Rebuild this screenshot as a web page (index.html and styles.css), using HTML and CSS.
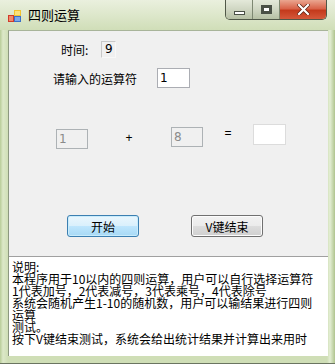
FILE: index.html
```html
<!DOCTYPE html>
<html lang="zh-CN">
<head>
    <meta charset="UTF-8">
    <title>四则运算</title>
    <link rel="stylesheet" href="styles.css">
</head>
<body>
    <div class="window">
        <div class="titlebar">
            <svg class="app-icon" width="14" height="14" viewBox="0 0 14 14">
                <rect x="0" y="6" width="6" height="7" fill="#d23a2a"/>
                <rect x="1" y="7" width="4" height="5" fill="#f08a6a"/>
                <rect x="6" y="1" width="7" height="6" fill="#f2c230"/>
                <rect x="7" y="2" width="5" height="4" fill="#fbe27a"/>
                <rect x="6" y="7" width="7" height="6" fill="#3a6fc8"/>
                <rect x="7" y="8" width="5" height="4" fill="#7fa8e8"/>
            </svg>
            <span class="title">四则运算</span>
            <div class="caption-buttons">
                <div class="cap-btn cap-min"><span class="min-glyph"></span></div>
                <div class="cap-btn cap-max"><span class="max-glyph"></span></div>
                <div class="cap-btn cap-close">
                    <svg width="13" height="11" viewBox="0 0 13 11">
                        <path d="M2 1 L11 10 M11 1 L2 10" stroke="#5a2010" stroke-width="3.6" stroke-linecap="square"/>
                        <path d="M2 1 L11 10 M11 1 L2 10" stroke="#ffffff" stroke-width="2.2" stroke-linecap="square"/>
                    </svg>
                </div>
            </div>
        </div>

        <div class="client">
            <div class="row row-time">
                <span class="label label-time">时间:</span>
                <div class="box box-time">9</div>
            </div>
            <div class="row row-op">
                <span class="label label-op">请输入的运算符</span>
                <div class="box box-op">1</div>
            </div>
            <div class="row row-calc">
                <div class="box box-disabled box-a">1</div>
                <span class="sign sign-plus">+</span>
                <div class="box box-disabled box-b">8</div>
                <span class="sign sign-eq">=</span>
                <div class="box box-result"></div>
            </div>
            <div class="row row-buttons">
                <button class="btn btn-focus">开始</button>
                <button class="btn btn-end">V键结束</button>
            </div>
            <div class="notes">说明:
本程序用于10以内的四则运算，用户可以自行选择运算符
1代表加号，2代表减号，3代表乘号，4代表除号
系统会随机产生1-10的随机数，用户可以输结果进行四则
运算
测试。
按下V键结束测试，系统会给出统计结果并计算出来用时</div>
        </div>
    </div>
</body>
</html>
```

FILE: styles.css
```css
* {
    margin: 0;
    padding: 0;
    box-sizing: border-box;
}

body {
    width: 335px;
    height: 364px;
    overflow: hidden;
    background: #cfdcb8;
    font-family: "Noto Sans CJK SC", "DejaVu Sans", sans-serif;
    font-size: 12px;
    color: #000;
}

/* Window frame */
.window {
    width: 335px;
    height: 364px;
    display: flex;
    flex-direction: column;
    padding: 0 7px 7px 8px;
    background: linear-gradient(to right, #b8cc98 0px, #dce8c8 3px, #cfdeb6 8px, #cfdeb6 327px, #e4eed4 330px, #b0c48e 335px);
    border-bottom: 1px solid #6a7460;
}

.titlebar {
    height: 30px;
    display: flex;
    align-items: center;
    position: relative;
    margin: 0 -7px 0 -8px;
    padding-left: 8px;
    background: linear-gradient(to bottom, #eaf0de 0%, #dde7cb 50%, #d0deb8 100%);
}

.app-icon {
    margin-right: 6px;
    margin-top: 1px;
}

.title {
    font-size: 13px;
    color: #000;
    margin-top: -1px;
}

/* Min / max / close */
.caption-buttons {
    position: absolute;
    top: 0;
    right: 8px;
    height: 20px;
    display: flex;
    border: 1px solid #505848;
    border-top: none;
    border-radius: 0 0 5px 5px;
    overflow: hidden;
}

.cap-btn {
    height: 19px;
    display: flex;
    align-items: center;
    justify-content: center;
}

.cap-min,
.cap-max {
    width: 27px;
    background: linear-gradient(to bottom, #e4e9da 0%, #cfd6c2 50%, #b6c0a4 100%);
    border-right: 1px solid #7e8872;
}

.min-glyph {
    width: 11px;
    height: 4px;
    margin-top: 6px;
    background: #fff;
    border: 1px solid #4a5046;
}

.max-glyph {
    width: 11px;
    height: 9px;
    border: 1px solid #4a5046;
    background: #fff;
    box-shadow: inset 0 0 0 2px #4a5046, inset 0 0 0 3px #fff;
}

.cap-close {
    width: 46px;
    background: linear-gradient(to bottom, #eaa690 0%, #d9644a 45%, #c43a1c 55%, #d5583a 100%);
}

/* Form client area */
.client {
    flex: 1;
    display: flex;
    flex-direction: column;
    background: #f0f0f0;
    border-left: 1px solid #8c9880;
    border-top: 1px solid #a8b49a;
}

.row {
    display: flex;
    align-items: center;
}

.label {
    white-space: nowrap;
}

.box {
    height: 20px;
    width: 32px;
    border: 1px solid #abadb3;
    background: #fff;
    padding: 1px 0 0 2px;
    line-height: 16px;
    font-family: "DejaVu Sans", sans-serif;
    font-size: 12px;
}

.row-time {
    margin-top: 10px;
    height: 17px;
}

.label-time {
    margin-left: 52px;
    width: 40px;
}

.box-time {
    width: 15px;
    height: 17px;
    padding: 0 0 0 3px;
    line-height: 15px;
    background: #f0f0f0;
    border-color: #c8c8c8 #f8f8f8 #f8f8f8 #c8c8c8;
}

.row-op {
    margin-top: 10px;
    height: 20px;
}

.label-op {
    margin-left: 44px;
    width: 104px;
}

.box-op {
    width: 33px;
}

.row-calc {
    margin-top: 36px;
    height: 25px;
    align-items: flex-start;
}

.box-disabled {
    background: #f0f0f0;
    border-color: #adb2b5;
    color: #8a8a8a;
}

.box-a {
    margin-left: 47px;
    margin-top: 5px;
}

.sign {
    width: 8px;
    text-align: center;
    font-family: "Liberation Sans", sans-serif;
    font-size: 12px;
    color: #000;
}

.sign-plus {
    margin-left: 37px;
    margin-top: 7px;
}

.box-b {
    margin-left: 38px;
    margin-top: 3px;
}

.sign-eq {
    margin-left: 21px;
    margin-top: 2px;
}

.box-result {
    margin-left: 21px;
    width: 33px;
    height: 21px;
    border-color: #dcdcdc;
}

/* Buttons */
.row-buttons {
    margin-top: 66px;
    height: 22px;
}

.btn {
    width: 72px;
    height: 22px;
    font-family: "Noto Sans CJK SC", sans-serif;
    font-size: 12px;
    color: #000;
    border: 1px solid #707070;
    border-radius: 3px;
    background: linear-gradient(to bottom, #f2f2f2 0%, #ebebeb 50%, #dddddd 51%, #cfcfcf 100%);
    box-shadow: inset 0 0 0 1px #fcfcfc;
}

.btn-focus {
    margin-left: 58px;
    border-color: #3c7fb1;
    background: linear-gradient(to bottom, #eaf6fd 0%, #d9f0fc 50%, #bee6fd 51%, #a7d9f5 100%);
    box-shadow: inset 0 0 0 1px #c8ecfc;
}

.btn-end {
    margin-left: 52px;
}

/* Notes textbox docked at the bottom */
.notes {
    margin-top: 19px;
    flex: 1;
    background: #fff;
    border-top: 1px solid #a0a0a0;
    padding: 4px 0 0 3px;
    white-space: pre-line;
    line-height: 12px;
    font-size: 12px;
}
```
